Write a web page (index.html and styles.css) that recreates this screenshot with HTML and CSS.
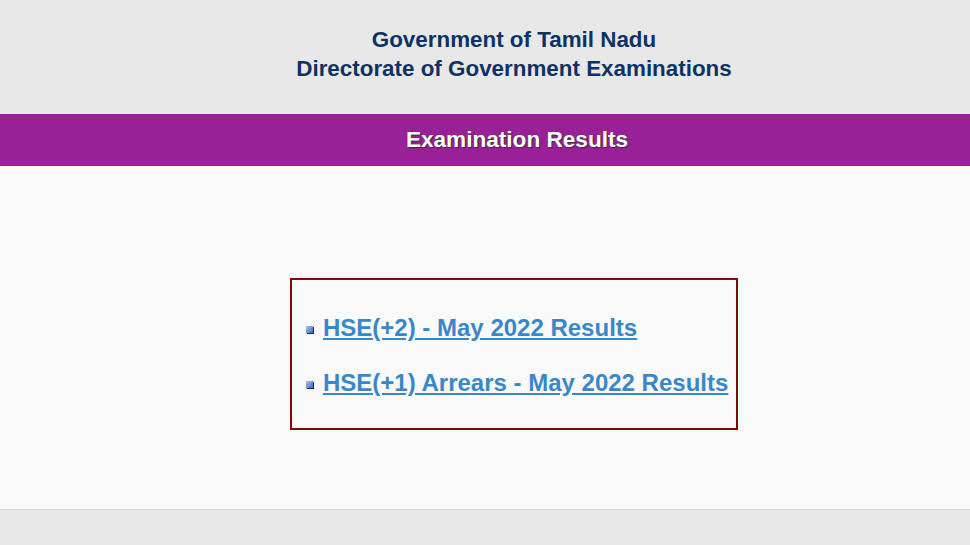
FILE: index.html
```html
<!DOCTYPE html>
<html lang="en">
<head>
    <meta charset="UTF-8">
    <meta name="viewport" content="width=device-width, initial-scale=1.0">
    <title>Examination Results</title>
    <link rel="stylesheet" href="styles.css">
</head>
<body>
    <div class="header">
        <h1>Government of Tamil Nadu<br>Directorate of Government Examinations</h1>
    </div>
    <div class="title-bar">
        <h2>Examination Results</h2>
    </div>
    <div class="main">
        <div class="result-box">
            <ul class="result-list">
                <li><a href="#">HSE(+2) - May 2022 Results</a></li>
                <li><a href="#">HSE(+1) Arrears - May 2022 Results</a></li>
            </ul>
        </div>
    </div>
    <div class="footer"></div>
</body>
</html>
```

FILE: styles.css
```css
body {
    margin: 0;
    font-family: "Liberation Sans", Arial, sans-serif;
    background-color: #e8e8e8;
}
.header {
    height: 114px;
    box-sizing: border-box;
    padding: 25px 0 0 58px;
    text-align: center;
    background: #e8e8e8;
}
.header h1 {
    margin: 0;
    font-size: 22.4px;
    line-height: 29px;
    font-weight: bold;
    color: #0d3263;
}
.title-bar {
    height: 52px;
    box-sizing: border-box;
    padding: 13px 0 0 64px;
    text-align: center;
    background: #9a2097;
}
.title-bar h2 {
    margin: 0;
    font-size: 22.6px;
    line-height: 26px;
    color: white;
    text-shadow: 1px 1px 1px #333, 0 0 1px #444;
}
.main {
    height: 344px;
    box-sizing: border-box;
    padding: 112px 0 0 58px;
    background: #f9f9f9;
    border-bottom: 1px solid #d6d6d6;
}
.result-box {
    width: 444px;
    height: 148px;
    margin: 0 auto;
    border: 2px solid #7b0a0a;
}
.result-list {
    list-style: none;
    margin: 0;
    padding: 20px 0 0 14px;
}
.result-list li {
    display: flex;
    align-items: center;
    height: 55px;
    font-size: 24px;
    font-weight: bold;
}
.result-list li::before {
    content: "";
    width: 7px;
    height: 7px;
    margin: 4px 10px 0 0;
    background: linear-gradient(135deg, #a9c6f0, #3a67c6);
    box-shadow: 1px 1px 0 #1d2a4a;
}
.result-list a {
    color: #3a87c8;
    text-decoration: underline;
}
.footer {
    height: 34px;
    background: #e8e8e8;
}
```
